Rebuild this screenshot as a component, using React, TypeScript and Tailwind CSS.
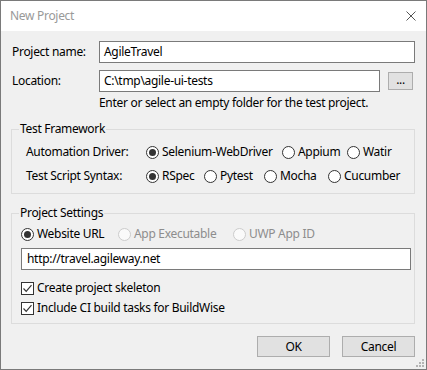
import type { ReactNode } from "react";

const FONT = "font-['Noto_Sans',sans-serif] text-[12px] leading-[16px] tracking-[-0.3px]";

function Radio({ checked, disabled, label, width }: { checked?: boolean; disabled?: boolean; label: string; width?: string }) {
  return (
    <label className={`flex items-center gap-[3px] ${width ?? ""}`}>
      <span
        className={`flex h-[13px] w-[13px] shrink-0 items-center justify-center rounded-full border ${
          disabled ? "border-[#cccccc] bg-[#fafafa]" : "border-[#333333] bg-white"
        }`}
      >
        {checked && <span className="h-[7px] w-[7px] rounded-full bg-[#333333]" />}
      </span>
      <span className={disabled ? "text-[#8d8d8d]" : "text-black"}>{label}</span>
    </label>
  );
}

function Checkbox({ label }: { label: string }) {
  return (
    <label className="flex h-[20px] items-center gap-[3px]">
      <span className="flex h-[13px] w-[13px] shrink-0 items-center justify-center border border-[#333333] bg-white">
        <svg width="11" height="11" viewBox="0 0 11 11">
          <path d="M1.5 5.5 L4.2 8.3 L9.5 2.2" fill="none" stroke="#333333" strokeWidth="1.2" />
        </svg>
      </span>
      <span>{label}</span>
    </label>
  );
}

function TextBox({ value, width }: { value: string; width: string }) {
  return (
    <div className={`flex h-[22px] items-center border border-[#7a7a7a] bg-white pl-[4px] ${width}`}>
      {value}
    </div>
  );
}

function Group({ title, children, className }: { title: string; children: ReactNode; className?: string }) {
  return (
    <fieldset className={`w-[404px] border border-[#dcdcdc] ${className ?? ""}`}>
      <legend className="ml-[7px] px-[1px]">{title}</legend>
      {children}
    </fieldset>
  );
}

function Button({ children, width, height }: { children: ReactNode; width: string; height: string }) {
  return (
    <div className={`flex items-center justify-center border border-[#adadad] bg-[#e1e1e1] ${width} ${height}`}>
      {children}
    </div>
  );
}

export default function App() {
  return (
    <div className={`relative flex h-[370px] w-[427px] flex-col border border-[#7a7a7a] bg-[#f0f0f0] text-black ${FONT}`}>
      <div className="flex h-[30px] shrink-0 items-center justify-between bg-white pl-[9px] pr-[10px]">
        <span className="text-[#999999]">New Project</span>
        <svg width="10" height="10" viewBox="0 0 10 10">
          <path d="M0.5 0.5 L9.5 9.5 M9.5 0.5 L0.5 9.5" stroke="#555555" strokeWidth="1" />
        </svg>
      </div>

      <div className="flex flex-1 flex-col pl-[10px] pr-[11px]">
        <div className="mt-[10px] flex items-center">
          <span className="w-[88px] pl-[1px]">Project name:</span>
          <TextBox value="AgileTravel" width="w-[316px]" />
        </div>
        <div className="mt-[7px] flex items-center">
          <span className="w-[88px] pl-[1px]">Location:</span>
          <TextBox value="C:\tmp\agile-ui-tests" width="w-[281px]" />
          <Button width="w-[25px] ml-[8px]" height="h-[18px]">
            <span className="mt-[-3px]">...</span>
          </Button>
        </div>
        <p className="mt-[3px] pl-[88px]">Enter or select an empty folder for the test project.</p>

        <Group title="Test Framework" className="mt-[10px]">
          <div className="pb-[5px] pl-[14px] pt-[3px]">
            <div className="flex h-[24px] items-center">
              <span className="w-[120px]">Automation Driver:</span>
              <Radio checked label="Selenium-WebDriver" width="w-[136px]" />
              <Radio label="Appium" width="w-[65px]" />
              <Radio label="Watir" />
            </div>
            <div className="flex h-[24px] items-center">
              <span className="w-[120px]">Test Script Syntax:</span>
              <Radio checked label="RSpec" width="w-[58px]" />
              <Radio label="Pytest" width="w-[60px]" />
              <Radio label="Mocha" width="w-[64px]" />
              <Radio label="Cucumber" />
            </div>
          </div>
        </Group>

        <Group title="Project Settings" className="mt-[11px]">
          <div className="pb-[5px] pl-[9px] pt-[3px]">
            <div className="flex h-[20px] items-center">
              <Radio checked label="Website URL" width="w-[97px]" />
              <Radio disabled label="App Executable" width="w-[115px]" />
              <Radio disabled label="UWP App ID" />
            </div>
            <div className="mt-[4px]">
              <TextBox value="http://travel.agileway.net" width="w-[390px] pl-[5px]" />
            </div>
            <div className="mt-[8px]">
              <Checkbox label="Create project skeleton" />
              <Checkbox label="Include CI build tasks for BuildWise" />
            </div>
          </div>
        </Group>

        <div className="mt-[12px] flex justify-end gap-[12px]">
          <Button width="w-[73px]" height="h-[21px]">OK</Button>
          <Button width="w-[73px]" height="h-[21px]">Cancel</Button>
        </div>
      </div>

      <svg className="absolute bottom-[2px] right-[2px]" width="9" height="9" viewBox="0 0 9 9">
        <rect x="7" y="1" width="2" height="2" fill="#b4b4b4" />
        <rect x="4" y="4" width="2" height="2" fill="#b4b4b4" />
        <rect x="7" y="4" width="2" height="2" fill="#b4b4b4" />
        <rect x="1" y="7" width="2" height="2" fill="#b4b4b4" />
        <rect x="4" y="7" width="2" height="2" fill="#b4b4b4" />
        <rect x="7" y="7" width="2" height="2" fill="#b4b4b4" />
      </svg>
    </div>
  );
}
